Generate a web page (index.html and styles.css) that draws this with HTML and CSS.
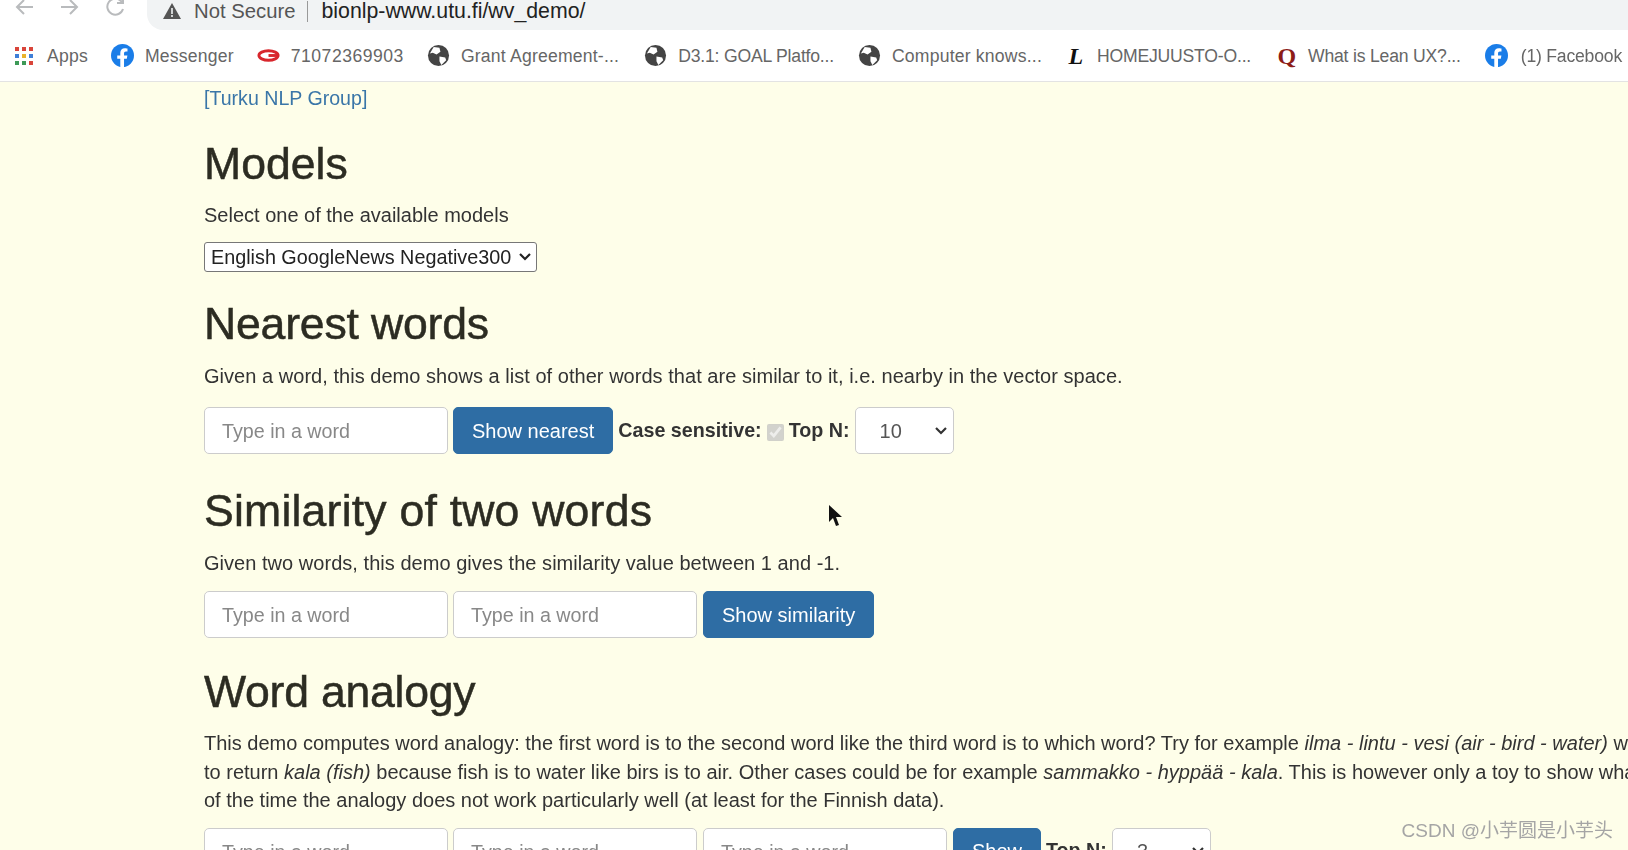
FILE: index.html
```html
<!DOCTYPE html>
<html lang="en">

<head>
    <meta charset="UTF-8">
    <title>Word vector demo</title>
    <link rel="stylesheet" href="styles.css">
</head>

<body>
    <div class="toolbar">
        <div class="nav-icons">
            <svg class="nav-icon" viewBox="0 0 24 24"><path d="M21 10H5M12 3l-7 7 7 7" /></svg>
            <svg class="nav-icon" viewBox="0 0 24 24"><path d="M3 10h16M12 3l7 7-7 7" /></svg>
            <svg class="nav-icon" viewBox="0 0 24 24"><path d="M19 12a8 8 0 1 1-2-8l2 2M19 0v6h-6" /></svg>
        </div>
        <div class="omnibox">
            <svg class="warn-icon" viewBox="0 0 18 16"><path d="M9 0l9 16H0z" /><path class="warn-mark" d="M8.200 5h1.600v6H8.200zM8.200 12h1.600v2H8.200z" /></svg>
            <span class="not-secure">Not Secure</span>
            <span class="omni-sep"></span>
            <span class="url">bionlp-www.utu.fi/wv_demo/</span>
        </div>
    </div>

    <div class="bookmarks">
        <div class="bookmark">
            <svg class="bm-icon apps-icon" viewBox="0 0 20 20">
                <rect x="1" y="1" width="4" height="4" fill="#d9453a" /><rect x="8" y="1" width="4" height="4" fill="#d9453a" /><rect x="15" y="1" width="4" height="4" fill="#d9453a" />
                <rect x="1" y="8" width="4" height="4" fill="#3f7fd8" /><rect x="8" y="8" width="4" height="4" fill="#e9b32c" /><rect x="15" y="8" width="4" height="4" fill="#3f7fd8" />
                <rect x="1" y="15" width="4" height="4" fill="#3d9a57" /><rect x="8" y="15" width="4" height="4" fill="#3d9a57" /><rect x="15" y="15" width="4" height="4" fill="#d9453a" />
            </svg>
            <span>Apps</span>
        </div>
        <div class="bookmark">
            <svg class="bm-icon" viewBox="0 0 24 24"><circle cx="12" cy="12" r="12" fill="#1a7de8" /><path fill="#fff" d="M16.500 15.500l.6-3.600h-3.500V9.700c0-1 .5-1.900 2-1.900h1.600V4.700s-1.400-.3-2.800-.3c-2.900 0-4.700 1.700-4.700 4.900v2.600H6.500v3.600h3.200V24h3.900v-8.500z" /></svg>
            <span>Messenger</span>
        </div>
        <div class="bookmark">
            <svg class="bm-icon" viewBox="0 0 24 24"><ellipse cx="12" cy="12" rx="10" ry="5" fill="none" stroke="#d8262c" stroke-width="3" /><path d="M12 12h11" stroke="#d8262c" stroke-width="3" /></svg>
            <span class="bm-wide">71072369903</span>
        </div>
        <div class="bookmark">
            <svg class="bm-icon" viewBox="0 0 24 24"><circle cx="12" cy="12" r="11" fill="#444" /><path fill="#fff" d="M7 3l6 1 1 4-4 3-4-2-3 1zM13 13l6 1 1 3-5 5-2-4z" /></svg>
            <span>Grant Agreement-...</span>
        </div>
        <div class="bookmark bm-gap-2">
            <svg class="bm-icon" viewBox="0 0 24 24"><circle cx="12" cy="12" r="11" fill="#444" /><path fill="#fff" d="M7 3l6 1 1 4-4 3-4-2-3 1zM13 13l6 1 1 3-5 5-2-4z" /></svg>
            <span class="bm-tight">D3.1: GOAL Platfo...</span>
        </div>
        <div class="bookmark bm-gap-1">
            <svg class="bm-icon" viewBox="0 0 24 24"><circle cx="12" cy="12" r="11" fill="#444" /><path fill="#fff" d="M7 3l6 1 1 4-4 3-4-2-3 1zM13 13l6 1 1 3-5 5-2-4z" /></svg>
            <span>Computer knows...</span>
        </div>
        <div class="bookmark bm-gap-1">
            <span class="bm-letter bm-l">L</span>
            <span class="bm-tight">HOMEJUUSTO-O...</span>
        </div>
        <div class="bookmark bm-gap-3">
            <span class="bm-letter bm-q">Q</span>
            <span class="bm-tight">What is Lean UX?...</span>
        </div>
        <div class="bookmark bm-gap-1">
            <svg class="bm-icon" viewBox="0 0 24 24"><circle cx="12" cy="12" r="12" fill="#1a7de8" /><path fill="#fff" d="M16.500 15.500l.6-3.600h-3.500V9.700c0-1 .5-1.900 2-1.900h1.600V4.700s-1.400-.3-2.800-.3c-2.900 0-4.700 1.700-4.700 4.900v2.600H6.500v3.600h3.200V24h3.900v-8.500z" /></svg>
            <span class="bm-tight bm-last">(1) Facebook</span>
        </div>
    </div>

    <div class="page">
        <a class="group-link" href="#">[Turku NLP Group]</a>

        <h2 class="first-title">Models</h2>
        <p>Select one of the available models</p>
        <select class="model-select">
            <option>English GoogleNews Negative300</option>
        </select>

        <h2 class="nearest-title">Nearest words</h2>
        <p class="wide-text">Given a word, this demo shows a list of other words that are similar to it, i.e. nearby in the vector space.</p>
        <form class="word-form nearest-form">
            <input class="word-input" type="text" placeholder="Type in a word">
            <button class="btn" type="button">Show nearest</button>
            <label class="form-label">Case sensitive:</label>
            <input class="case-check" type="checkbox" checked disabled>
            <label class="form-label">Top N:</label>
            <select class="topn">
                <option>10</option>
            </select>
        </form>

        <h2 class="similarity-title">Similarity of two words</h2>
        <p class="wide-text">Given two words, this demo gives the similarity value between 1 and -1.</p>
        <form class="word-form">
            <input class="word-input" type="text" placeholder="Type in a word">
            <input class="word-input" type="text" placeholder="Type in a word">
            <button class="btn" type="button">Show similarity</button>
        </form>

        <h2 class="analogy-title">Word analogy</h2>
        <p class="analogy-text">This demo computes word analogy: the first word is to the second word like the third word is to which word? Try for example <em>ilma - lintu - vesi (air - bird - water)</em> would be expected<br>
            to return <em>kala (fish)</em> because fish is to water like birs is to air. Other cases could be for example <em>sammakko - hyppää - kala</em>. This is however only a toy to show what<br>
            of the time the analogy does not work particularly well (at least for the Finnish data).</p>
        <form class="word-form">
            <input class="word-input" type="text" placeholder="Type in a word">
            <input class="word-input" type="text" placeholder="Type in a word">
            <input class="word-input" type="text" placeholder="Type in a word">
            <button class="btn" type="button">Show</button>
            <label class="form-label">Top N:</label>
            <select class="topn">
                <option>3</option>
            </select>
        </form>
    </div>

    <svg class="cursor" viewBox="0 0 14 24"><path d="M1 1v17l4-4 3 8 3-1-3-8h6z" /></svg>
    <div class="watermark">CSDN @小芋圆是小芋头</div>
</body>

</html>
```

FILE: styles.css
```css
/* default css */
html,
body {
    height: 850px;
    overflow: hidden;
}

body {
    position: relative;
    margin: 0;
    background-color: #fefee9;
    color: #333;
    font-family: "Liberation Sans", Arial, sans-serif;
    font-size: 20px;
    line-height: 28px;
    filter: blur(0.6px);
}

/* browser toolbar */
.toolbar {
    display: flex;
    height: 30px;
    background-color: #fff;
}

.nav-icons {
    display: flex;
    gap: 22px;
    padding-left: 12px;
    width: 136px;
}

.nav-icon {
    width: 24px;
    height: 24px;
    margin-top: -3px;
    fill: none;
    stroke: #b9bbbd;
    stroke-width: 2;
}

.omnibox {
    display: flex;
    flex: 1;
    align-items: center;
    padding: 0 0 8px 16px;
    margin-left: -1px;
    background-color: #f1f3f4;
    border-bottom-left-radius: 16px;
    font-size: 21.3px;
    color: #222;
}

.warn-icon {
    width: 18px;
    height: 16px;
    fill: #555;
}

.warn-mark {
    fill: #f1f3f4;
}

.not-secure {
    margin-left: 13px;
    font-size: 20.3px;
    color: #555;
}

.omni-sep {
    width: 1px;
    height: 21px;
    margin: 0 13px 0 12px;
    background-color: #999;
}

/* bookmarks bar */
.bookmarks {
    display: flex;
    align-items: center;
    gap: 23px;
    height: 51px;
    padding-left: 14px;
    background-color: #fff;
    border-bottom: 1px solid #e3e3e3;
    font-size: 17.6px;
    letter-spacing: 0.2px;
    color: #666;
    white-space: nowrap;
}

.bookmark {
    display: flex;
    align-items: center;
    gap: 11px;
}

.bm-gap-1 {
    margin-left: 1px;
}

.bm-gap-2 {
    margin-left: 2px;
}

.bm-gap-3 {
    margin-left: 3px;
}

.bm-wide {
    letter-spacing: 0.5px;
}

.bm-tight {
    letter-spacing: -0.2px;
}

.bm-last {
    margin-left: 2px;
}

.bm-icon {
    width: 23px;
    height: 23px;
}

.apps-icon {
    width: 20px;
    height: 20px;
    margin-right: 2px;
}

.bm-letter {
    font-family: "Liberation Serif", serif;
    font-weight: bold;
    font-size: 24px;
    width: 20px;
    text-align: center;
}

.bm-l {
    color: #111;
    font-style: italic;
}

.bm-q {
    color: #8c1c18;
}

/* page content */
.page {
    padding: 2px 0 0 204px;
    white-space: nowrap;
}

.group-link {
    display: block;
    font-size: 19.6px;
    color: #3a76a8;
    text-decoration: none;
}

h2 {
    margin: 28px 0 16px;
    font-size: 44.6px;
    font-weight: 500;
    line-height: 45px;
    color: #2c2c22;
    -webkit-text-stroke: 0.5px #2c2c22;
}

.first-title {
    margin: 29px 0 15px;
}

.nearest-title {
    margin: 29px 0 16px;
    letter-spacing: -0.2px;
}

.similarity-title {
    margin-top: 34px;
    letter-spacing: 0.2px;
}

.analogy-title {
    margin: 31px 0 15px;
    letter-spacing: -0.25px;
}

p {
    margin: 0 0 14px;
}

.wide-text {
    letter-spacing: 0.035px;
}

.analogy-text {
    margin-bottom: 13px;
    line-height: 28.5px;
}

.model-select {
    display: block;
    width: 333px;
    height: 30px;
    margin-top: -1px;
    padding-left: 6px;
    font-family: inherit;
    font-size: 19.8px;
    color: #222;
    background: #fff url("data:image/svg+xml,%3Csvg xmlns='http://www.w3.org/2000/svg' viewBox='0 0 14 10'%3E%3Cpath d='M2 2l5 5 5-5' fill='none' stroke='%23222' stroke-width='2.200'/%3E%3C/svg%3E") no-repeat right 4px center / 14px 10px;
    border: 1px solid #777;
    border-radius: 3px;
    appearance: none;
}

.word-form {
    display: flex;
    align-items: center;
    height: 47px;
}

.nearest-form {
    margin-top: 17px;
}

.word-input {
    box-sizing: border-box;
    width: 244px;
    height: 47px;
    margin-right: 5px;
    padding: 9px 17px 7px 17px;
    font-family: inherit;
    font-size: 19.7px;
    background-color: #fff;
    border: 1px solid #ccc;
    border-radius: 5px;
}

.word-input + .word-input {
    margin-right: 6px;
}

.word-input::placeholder {
    color: #888;
}

.btn {
    height: 47px;
    padding: 1px 18px 0;
    font-family: inherit;
    font-size: 20px;
    color: #fff;
    background-color: #2e6da4;
    border: 1px solid #2e6da4;
    border-radius: 5px;
}

.form-label {
    margin: -2px 0 0 5px;
    font-size: 19.7px;
    font-weight: bold;
}

.case-check {
    width: 17px;
    height: 17px;
    margin: 4px 0 0 5px;
}

.topn {
    box-sizing: border-box;
    width: 99px;
    height: 47px;
    margin-left: 5px;
    padding-left: 24px;
    font-family: inherit;
    font-size: 20px;
    color: #555;
    background: #fff url("data:image/svg+xml,%3Csvg xmlns='http://www.w3.org/2000/svg' viewBox='0 0 14 10'%3E%3Cpath d='M2 2l5 5 5-5' fill='none' stroke='%23333' stroke-width='2.200'/%3E%3C/svg%3E") no-repeat right 5px center / 14px 10px;
    border: 1px solid #ccc;
    border-radius: 5px;
    appearance: none;
}

/* over the page */
.cursor {
    position: absolute;
    left: 828px;
    top: 504px;
    width: 14px;
    height: 24px;
    fill: #111;
}

.watermark {
    position: absolute;
    right: 15px;
    top: 818px;
    font-family: "Liberation Sans", "Noto Sans CJK SC", sans-serif;
    font-size: 19px;
    line-height: 26px;
    color: #a5a5a5;
}
```
